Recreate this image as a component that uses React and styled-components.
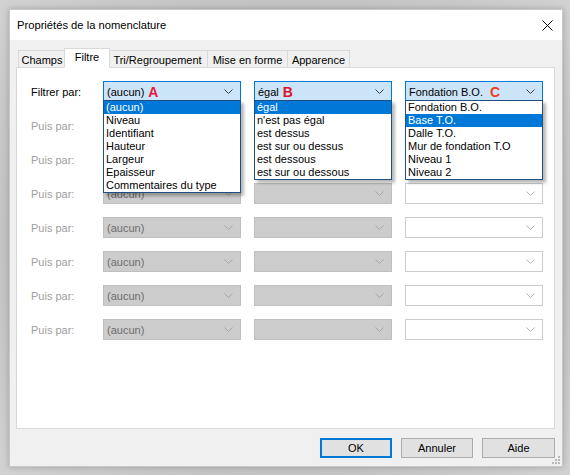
import React from "react";
import styled, { createGlobalStyle } from "styled-components";

const Global = createGlobalStyle`
  html, body { margin: 0; padding: 0; }
  body {
    background: #cdcdcd;
    font-family: "Liberation Sans", Arial, sans-serif;
    font-size: 11px;
    color: #000;
  }
`;

const Screen = styled.div`
  width: 570px;
  height: 475px;
  box-sizing: border-box;
  padding: 9px 7px 8px 9px;
  display: flex;
  background: radial-gradient(ellipse at center, #b8b8b8 0%, #c4c4c4 70%, #d2d2d2 100%);
`;

const Dialog = styled.div`
  width: 554px;
  height: 458px;
  box-sizing: border-box;
  background: #f0f0f0;
  border: 1px solid #c8c8c8;
  box-shadow: 0 0 6px rgba(0, 0, 0, 0.22);
  display: flex;
  flex-direction: column;
  position: relative;
`;

const TitleBar = styled.div`
  height: 30px;
  background: #fff;
  display: flex;
  align-items: center;
  justify-content: space-between;
  padding: 0 9px 0 7px;
  font-size: 11.2px;
`;

const CloseBtn = styled.div`
  width: 12px;
  height: 12px;
  display: flex;
  align-items: center;
  justify-content: center;
`;

const Body = styled.div`
  flex: 1;
  display: flex;
  flex-direction: column;
  padding: 8px 7px 8px 6px;
`;

const TabStrip = styled.div`
  display: flex;
  align-items: flex-end;
  height: 20px;
  padding-left: 2px;
  position: relative;
  z-index: 2;
  margin-bottom: -1px;
`;

const Tab = styled.div`
  width: ${(p) => p.$w}px;
  height: ${(p) => (p.$active ? "20px" : "18px")};
  box-sizing: border-box;
  padding-top: ${(p) => (p.$active ? "2px" : "3px")};
  margin: ${(p) => (p.$active ? "0 -2px" : "0")};
  border: 1px solid #d9d9d9;
  border-bottom: ${(p) => (p.$active ? "1px solid #fff" : "1px solid #d9d9d9")};
  border-left-width: ${(p) => (p.$first || p.$active ? "1px" : "0")};
  background: ${(p) => (p.$active ? "#fff" : "#f0f0f0")};
  position: relative;
  z-index: ${(p) => (p.$active ? 2 : 1)};
  white-space: nowrap;
  text-align: center;
  line-height: 13px;
`;

const Panel = styled.div`
  height: 362px;
  box-sizing: border-box;
  background: #fff;
  border: 1px solid #d9d9d9;
  padding: 13px 0 0 14px;
  position: relative;
  z-index: 1;
`;

const Grid = styled.div`
  display: grid;
  grid-template-columns: 59px 138px 138px 138px;
  grid-auto-rows: 21px;
  column-gap: 13px;
  row-gap: 13px;
`;

const Label = styled.div`
  display: flex;
  align-items: center;
  color: ${(p) => (p.$disabled ? "#a0a0a0" : "#000")};
  white-space: nowrap;
`;

const comboBg = { active: "#cce4f7", disabled: "#cccccc", empty: "#fff" };
const comboBorder = { active: "#0078d7", disabled: "#bfbfbf", empty: "#cccccc" };
const chevColor = { active: "#404040", disabled: "#a6a6a6", empty: "#b4b4b4" };

const Combo = styled.div`
  position: relative;
  box-sizing: border-box;
  height: 21px;
  background: ${(p) => comboBg[p.$variant]};
  border: 1px solid ${(p) => comboBorder[p.$variant]};
  display: flex;
  align-items: center;
  padding: 0 7px 0 3px;
  color: ${(p) => (p.$variant === "disabled" ? "#6d6d6d" : "#000")};
  z-index: ${(p) => (p.$variant === "active" ? 3 : 1)};
`;

const ComboText = styled.div`
  flex: 1;
  white-space: nowrap;
  display: flex;
  align-items: center;
  gap: ${(p) => p.$gap || 4}px;
`;

const Mark = styled.span`
  color: ${(p) => p.$color};
  font-weight: bold;
  font-size: 14px;
  line-height: 14px;
  font-family: "Liberation Sans", Arial, sans-serif;
`;

const List = styled.div`
  position: absolute;
  left: -1px;
  right: -1px;
  top: calc(100% - 1px);
  box-sizing: border-box;
  background: #fff;
  border: 1px solid #1f4f82;
  box-shadow: 3px 3px 3px rgba(0, 0, 0, 0.28);
  z-index: 5;
`;

const Item = styled.div`
  height: 13px;
  line-height: 13px;
  padding-left: 2px;
  white-space: nowrap;
  background: ${(p) => (p.$sel ? "#0078d7" : "transparent")};
  color: ${(p) => (p.$sel ? "#fff" : "#000")};
`;

const Footer = styled.div`
  display: flex;
  justify-content: flex-end;
  gap: 9px;
  margin-top: 9px;
`;

const Button = styled.div`
  width: ${(p) => p.$w}px;
  height: 20px;
  box-sizing: border-box;
  background: #e1e1e1;
  border: ${(p) => (p.$default ? "2px solid #0078d7" : "1px solid #adadad")};
  display: flex;
  align-items: center;
  justify-content: center;
`;

const Grip = styled.div`
  position: absolute;
  right: 1px;
  bottom: 1px;
  width: 9px;
  height: 9px;
  display: flex;
`;

const Chevron = ({ color }) => (
  <svg width="9" height="5" viewBox="0 0 9 5">
    <polyline points="0.5,0.5 4.5,4.5 8.5,0.5" fill="none" stroke={color} strokeWidth="1" />
  </svg>
);

const ComboBox = ({ variant, children, list, sel, gap }) => (
  <Combo $variant={variant}>
    <ComboText $gap={gap}>{children}</ComboText>
    <Chevron color={chevColor[variant]} />
    {list && (
      <List>
        {list.map((t, i) => (
          <Item key={t} $sel={i === sel}>
            {t}
          </Item>
        ))}
      </List>
    )}
  </Combo>
);

const listA = ["(aucun)", "Niveau", "Identifiant", "Hauteur", "Largeur", "Epaisseur", "Commentaires du type"];
const listB = ["égal", "n'est pas égal", "est dessus", "est sur ou dessus", "est dessous", "est sur ou dessous"];
const listC = ["Fondation B.O.", "Base T.O.", "Dalle T.O.", "Mur de fondation T.O", "Niveau 1", "Niveau 2"];

const tabs = [
  { t: "Champs", w: 48 },
  { t: "Filtre", w: 46 },
  { t: "Tri/Regroupement", w: 100 },
  { t: "Mise en forme", w: 80 },
  { t: "Apparence", w: 62 },
];

export default function App() {
  return (
    <>
      <Global />
      <Screen>
        <Dialog>
          <TitleBar>
            <span>Propriétés de la nomenclature</span>
            <CloseBtn>
              <svg width="11" height="11" viewBox="0 0 11 11">
                <path d="M0.5 0.5 L10.5 10.5 M10.5 0.5 L0.5 10.5" stroke="#000" strokeWidth="1" />
              </svg>
            </CloseBtn>
          </TitleBar>
          <Body>
            <TabStrip>
              {tabs.map((tab, i) => (
                <Tab key={tab.t} $w={tab.w} $active={i === 1} $first={i === 0}>
                  {tab.t}
                </Tab>
              ))}
            </TabStrip>
            <Panel>
              <Grid>
                <Label>Filtrer par:</Label>
                <ComboBox variant="active" list={listA} sel={0}>
                  (aucun) <Mark $color="#e8173b">A</Mark>
                </ComboBox>
                <ComboBox variant="active" list={listB} sel={0}>
                  égal <Mark $color="#e0102a">B</Mark>
                </ComboBox>
                <ComboBox variant="active" list={listC} sel={1} gap={7}>
                  Fondation B.O. <Mark $color="#ef3a1c">C</Mark>
                </ComboBox>
                {Array.from({ length: 7 }).map((_, i) => (
                  <React.Fragment key={i}>
                    <Label $disabled>Puis par:</Label>
                    <ComboBox variant="disabled">(aucun)</ComboBox>
                    <ComboBox variant="disabled" />
                    <ComboBox variant="empty" />
                  </React.Fragment>
                ))}
              </Grid>
            </Panel>
            <Footer>
              <Button $w={72} $default>OK</Button>
              <Button $w={72}>Annuler</Button>
              <Button $w={73}>Aide</Button>
            </Footer>
          </Body>
          <Grip>
            <svg width="9" height="9" viewBox="0 0 9 9">
              <rect x="6" y="0" width="2" height="2" fill="#b9b9b9" />
              <rect x="3" y="3" width="2" height="2" fill="#b9b9b9" />
              <rect x="6" y="3" width="2" height="2" fill="#b9b9b9" />
              <rect x="0" y="6" width="2" height="2" fill="#b9b9b9" />
              <rect x="3" y="6" width="2" height="2" fill="#b9b9b9" />
              <rect x="6" y="6" width="2" height="2" fill="#b9b9b9" />
            </svg>
          </Grip>
        </Dialog>
      </Screen>
    </>
  );
}
